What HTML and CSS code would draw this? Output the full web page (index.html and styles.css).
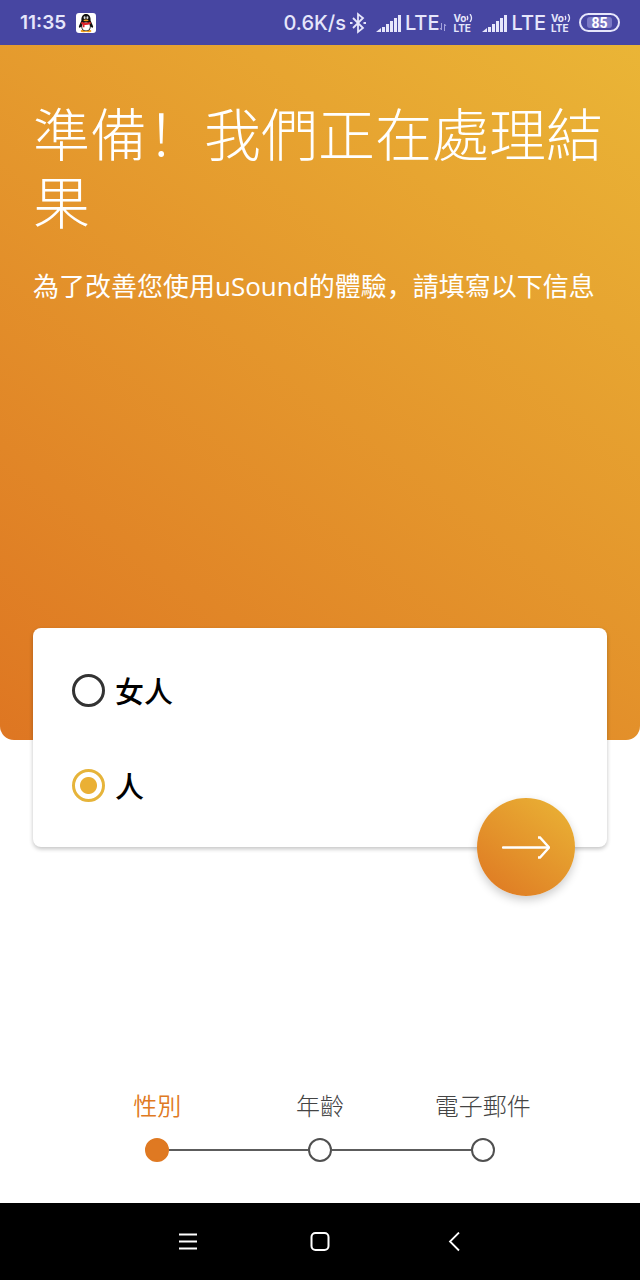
FILE: index.html
```html
<!DOCTYPE html>
<html lang="zh-Hans">
<head>
<meta charset="utf-8">
<meta name="viewport" content="width=device-width, initial-scale=1">
<title>uSound</title>
<link rel="stylesheet" href="styles.css">
</head>
<body>
<header class="status">
  <span class="status-text clock">11:35</span>
  <svg class="qq" width="20" height="20" viewBox="0 0 20 20" aria-hidden="true">
    <rect width="20" height="20" rx="3" fill="#fff"/>
    <ellipse cx="7.500" cy="18" rx="3" ry="1.200" fill="#f0a020"/>
    <ellipse cx="12.500" cy="18" rx="3" ry="1.200" fill="#f0a020"/>
    <path d="M10 1C7 1 5.200 3.500 5.400 7.500L2.800 13.500l.8 1.500 1.700-1.500C5.300 16.500 7 18 10 18s4.700-1.500 4.700-4.500l1.700 1.500.8-1.500-2.600-6C14.800 3.500 13 1 10 1z" fill="#111"/>
    <ellipse cx="10" cy="13.500" rx="3.900" ry="3.900" fill="#fff"/>
    <ellipse cx="8.600" cy="4.700" rx="1" ry="1.400" fill="#ddd"/>
    <ellipse cx="11.400" cy="4.700" rx="1" ry="1.400" fill="#ddd"/>
    <ellipse cx="10" cy="7.400" rx="2.600" ry=".8" fill="#f0a020"/>
    <path d="M5.500 8.800q4.500 2 9 0l.3 2q-3 1.400-6.300 1.200v2.300H6.700v-2.700L5.200 11z" fill="#e0242c"/>
  </svg>
  <span class="status-text speed">0.6K/s</span>
  <svg class="bluetooth" width="18" height="22" viewBox="0 0 18 22" fill="none" stroke="#e6e6fb" stroke-width="1.800" aria-hidden="true">
    <path d="M4 6l10 10-5 4V2l5 4L4 16"/>
    <path d="M1 11h2.500M14.500 11h2.500" stroke-width="2.200"/>
  </svg>
  <svg class="bars" width="25" height="18" viewBox="0 0 25 18" fill="#e6e6fb" aria-hidden="true">
    <path d="M0 18l5-4v4zM6 13h3v5H6zM10 10h3v8h-3zM14 7h3v11h-3zM18 4h3v14h-3zM22 1h3v17h-3z"/>
  </svg>
  <span class="status-text lte">LTE</span>
  <svg class="data" width="8" height="8" viewBox="0 0 8 8" fill="none" stroke="#a5a3dc" aria-hidden="true">
    <path d="M2.500 0v7L1 5M5.500 8V1L7 3"/>
  </svg>
  <span class="volte"><span class="vo">Vo<svg width="7" height="8" viewBox="0 0 7 8" fill="none" stroke="#e6e6fb" stroke-width="1.300" aria-hidden="true"><path d="M1 2q1.500 2 0 4M4 0q3 4 0 8"/></svg></span><span>LTE</span></span>
  <svg class="bars second" width="25" height="18" viewBox="0 0 25 18" fill="#e6e6fb" aria-hidden="true">
    <path d="M0 18l5-4v4zM6 13h3v5H6zM10 10h3v8h-3zM14 7h3v11h-3zM18 4h3v14h-3zM22 1h3v17h-3z"/>
  </svg>
  <span class="status-text lte">LTE</span>
  <span class="volte near"><span class="vo">Vo<svg width="7" height="8" viewBox="0 0 7 8" fill="none" stroke="#e6e6fb" stroke-width="1.300" aria-hidden="true"><path d="M1 2q1.500 2 0 4M4 0q3 4 0 8"/></svg></span><span>LTE</span></span>
  <span class="battery"><span class="charge">85</span></span>
</header>
<main class="page">
  <section class="hero">
    <h1 class="title">準備！我們正在處理結果</h1>
    <p class="subtitle">為了改善您使用uSound的體驗，請填寫以下信息</p>
  </section>
  <form class="card">
    <label class="option"><input class="radio" type="radio" name="gender" value="f"><span>女人</span></label>
    <label class="option"><input class="radio" type="radio" name="gender" value="m" checked><span>人</span></label>
    <button class="next" type="button" aria-label="下一步">
      <svg width="48" height="24" viewBox="0 0 48 24" fill="none" stroke="#fff" stroke-width="2.400" aria-hidden="true">
        <path d="M1 12.500h45" stroke-linecap="round"/>
        <path d="M36 2.500h2l9 10-9 10h-2"/>
      </svg>
    </button>
  </form>
  <ol class="steps">
    <li class="step current"><span>性別</span><span class="track"><span class="dot"></span></span></li>
    <li class="step"><span>年齡</span><span class="track"><span class="dot"></span></span></li>
    <li class="step"><span>電子郵件</span><span class="track"><span class="dot"></span></span></li>
  </ol>
</main>
<nav class="navbar">
  <button class="nav-button" type="button" aria-label="選單"><svg width="20" height="20" viewBox="0 0 20 20" fill="none" stroke="#fff" stroke-width="1.800"><path d="M2 2.500h18M2 9.500h18M2 16.500h18"/></svg></button>
  <button class="nav-button" type="button" aria-label="主畫面"><svg width="20" height="20" viewBox="0 0 20 20" fill="none" stroke="#fff" stroke-width="2"><rect x="1.500" y="1" width="17" height="17" rx="4"/></svg></button>
  <button class="nav-button" type="button" aria-label="返回"><svg width="20" height="20" viewBox="0 0 20 20" fill="none" stroke="#fff" stroke-width="1.800"><path d="M16 .5l-9 9 9 9"/></svg></button>
</nav>
</body>
</html>
```
FILE: styles.css
```css
* {
  box-sizing: border-box;
}

body {
  margin: 0;
  min-height: 100vh;
  display: flex;
  flex-direction: column;
  background: #fff;
  color: #000;
  font-family: "Open Sans", "Noto Sans CJK SC", sans-serif;
}

button {
  border: 0;
  padding: 0;
  cursor: pointer;
}

svg {
  flex: none;
}

.status {
  display: flex;
  align-items: center;
  height: 45px;
  padding: 0 20px;
  background: #4746a2;
  color: #e6e6fb;
  font-family: Inter, sans-serif;
}

.status-text {
  font-size: 20px;
  line-height: 24px;
  font-weight: 500;
}

.clock {
  font-size: 19px;
  font-weight: 600;
}

.qq {
  margin-left: 10px;
}

.speed {
  margin-left: auto;
}

.bluetooth {
  margin: 0 9px 0 3px;
}

.lte {
  margin-left: 4px;
}

.data {
  margin-top: 8px;
}

.volte {
  display: flex;
  flex-direction: column;
  margin-left: 6px;
  font-size: 10px;
  line-height: 10px;
  font-weight: 700;
}

.near {
  margin-left: 5px;
}

.vo {
  display: flex;
  align-items: center;
}

.second {
  margin-left: 9px;
}

.battery {
  display: flex;
  width: 41px;
  height: 19px;
  margin-left: 8px;
  padding: 2px 6px;
  border: 2px solid #e6e6fb;
  border-radius: 10px;
}

.charge {
  flex: 1;
  border-radius: 3px;
  background: #7b79c6;
  color: #fff;
  font-family: Roboto, sans-serif;
  font-size: 14px;
  line-height: 12px;
  font-weight: 700;
  text-align: center;
}

.page {
  flex: 1;
  display: flex;
  flex-direction: column;
}

.hero {
  min-height: 695px;
  padding: 52px 33px 0;
  border-radius: 0 0 14px 14px;
  background: linear-gradient(37deg, #de7622, #eab536);
  color: #fff;
}

.title {
  margin: 0;
  font-size: 57px;
  line-height: 68px;
  font-weight: 300;
  font-family: "Noto Sans CJK SC", sans-serif;
}

.subtitle {
  margin: 33px 0 0;
  font-size: 26px;
  line-height: 40px;
}

.card {
  position: relative;
  display: flex;
  flex-direction: column;
  align-items: flex-start;
  gap: 51px;
  margin: -112px 33px 0;
  padding: 40px 39px;
  border-radius: 8px;
  background: #fff;
  box-shadow: 0 2px 4px rgba(0, 0, 0, 0.24);
}

.option {
  display: flex;
  align-items: center;
  gap: 10px;
  font-size: 29px;
  line-height: 44px;
  font-weight: 500;
  font-family: "Noto Sans CJK SC", sans-serif;
}

.radio {
  appearance: none;
  width: 33px;
  height: 33px;
  margin: 0;
  border: 3px solid #333;
  border-radius: 50%;
}

.radio:checked {
  border-color: #e6b43a;
  background: radial-gradient(circle, #eab035 8px, transparent 9px);
}

.next {
  position: absolute;
  right: 32px;
  bottom: -49px;
  display: flex;
  align-items: center;
  justify-content: center;
  width: 98px;
  height: 98px;
  border-radius: 50%;
  background: linear-gradient(37deg, #de7622, #eab536);
  box-shadow: 0 4px 10px rgba(0, 0, 0, 0.2);
}

.steps {
  display: flex;
  margin: auto 76px 41px;
  padding: 0;
  list-style: none;
}

.step {
  flex: 1;
  display: flex;
  flex-direction: column;
  gap: 15px;
  color: #444;
  font-family: "Noto Sans CJK SC", sans-serif;
  font-size: 24px;
  line-height: 36px;
  font-weight: 300;
  text-align: center;
  white-space: nowrap;
}

.current {
  color: #df7922;
  font-weight: 350;
}

.track {
  display: flex;
  align-items: center;
}

.track::before,
.track::after {
  content: "";
  flex: 1;
  height: 2px;
  background: #5c5c5c;
}

.step:first-child .track::before,
.step:last-child .track::after {
  background: none;
}

.dot {
  width: 24px;
  height: 24px;
  border: 2px solid #505050;
  border-radius: 50%;
}

.current .dot {
  border-color: #df7922;
  background: #df7922;
}

.navbar {
  display: flex;
  align-items: center;
  justify-content: center;
  gap: 113px;
  height: 77px;
  background: #000;
}

.nav-button {
  display: flex;
  background: none;
}
```
